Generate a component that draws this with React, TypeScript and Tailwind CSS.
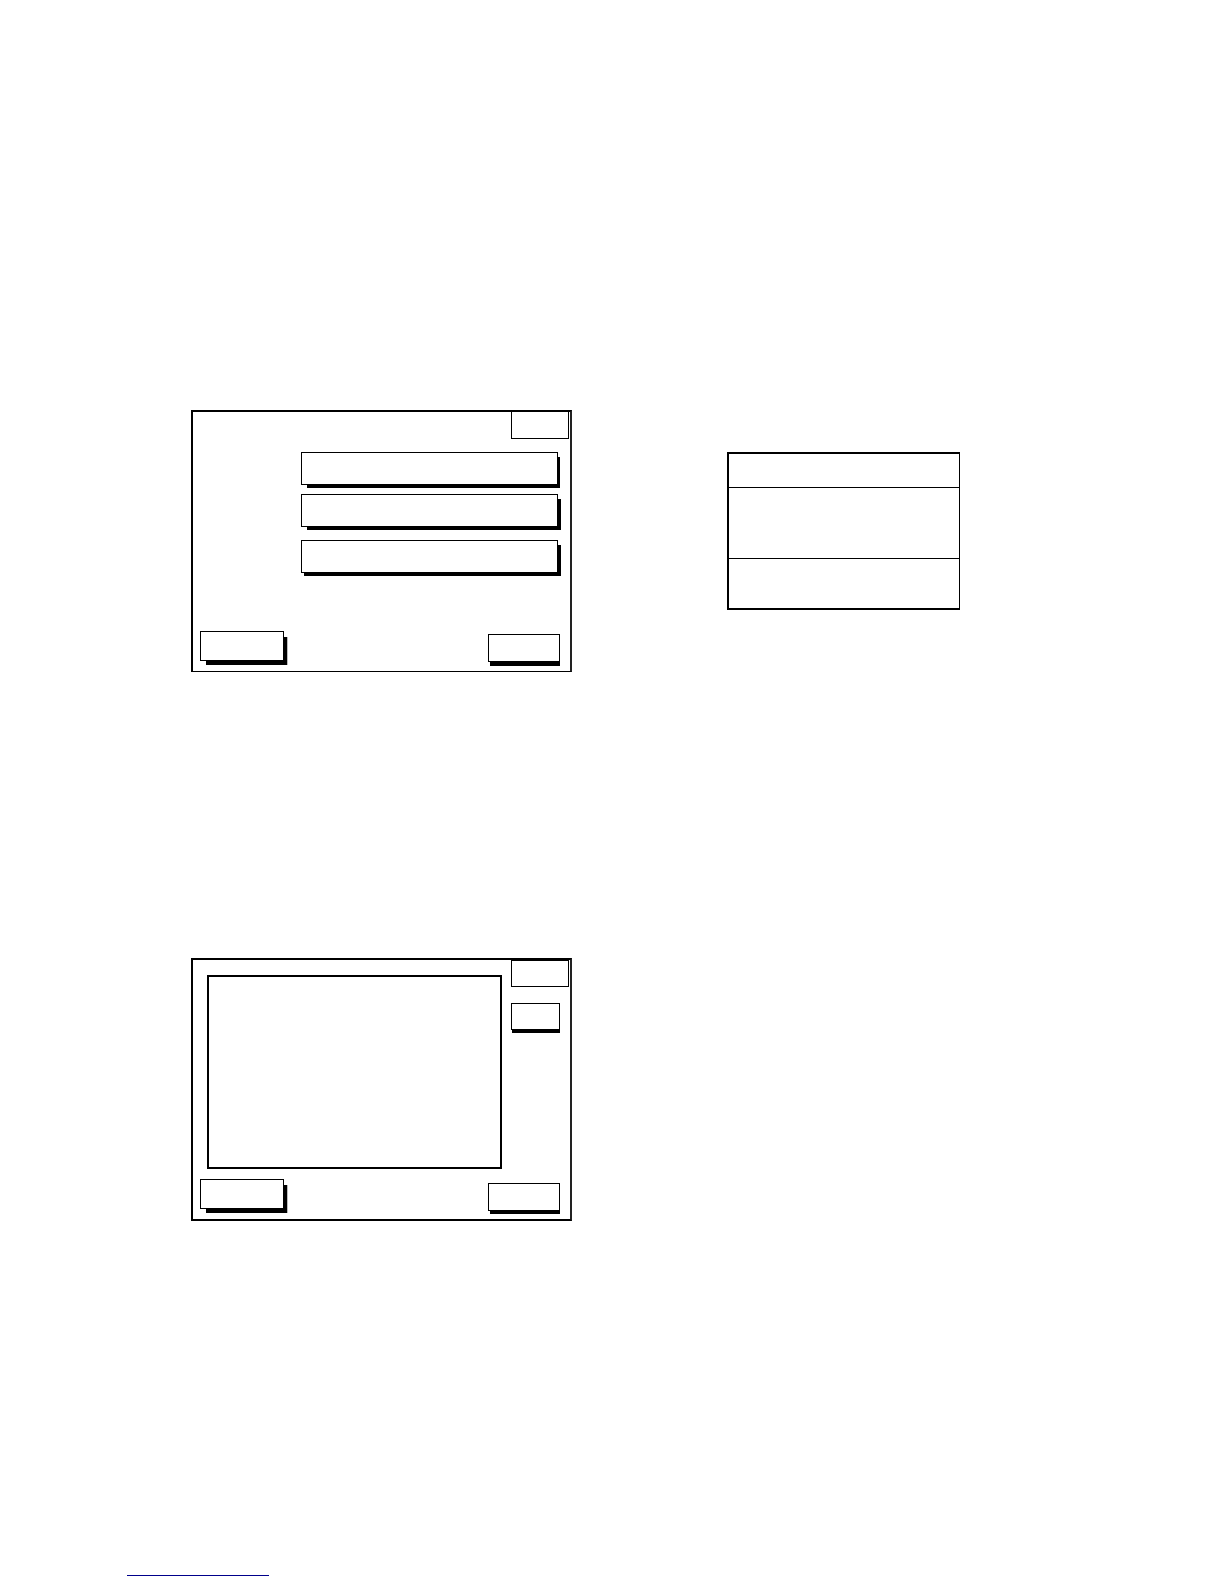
const rowButton = "block h-[33px] w-full border border-black bg-white";

function BackButton() {
  return (
    <button
      type="button"
      aria-label="Left key"
      className="h-[30px] w-[84px] border border-black bg-white shadow-[4px_6px_0_-2px_#000,5px_6px_0_-2px_#000,5px_4px_0_-2px_#000,5px_5px_0_-1px_#bbb]"
    />
  );
}

function OptionsPanel() {
  return (
    <section className="flex flex-col border-2 border-b border-black border-r-[#222]">
      <div className="mr-px h-[27px] w-[58px] self-end border border-t-0 border-black" />

      <div className="mt-[13px] ml-[108px] mr-3">
        <button
          type="button"
          aria-label="First option"
          className={`${rowButton} shadow-[4px_3px_0_-2px_#000,4px_5px_0_-2px_#000]`}
        />
        <button
          type="button"
          aria-label="Second option"
          className={`${rowButton} mt-[9px] shadow-[4px_5px_0_-2px_#000,5px_3px_0_-2px_#000,5px_5px_0_-2px_#000]`}
        />
        <button
          type="button"
          aria-label="Third option"
          className={`${rowButton} mt-[13px] shadow-[2px_4px_0_-1px_#000,4px_4px_0_-1px_#000]`}
        />
      </div>

      <div className="mt-[58px] flex items-start justify-between pl-[7px] pr-[10px] pb-[9px]">
        <BackButton />
        <button
          type="button"
          aria-label="Right key"
          className="mt-[3px] h-7 w-[72px] border border-black bg-white shadow-[1px_5px_0_-1px_#000]"
        />
      </div>
    </section>
  );
}

function DisplayPanel() {
  return (
    <section className="border-2 border-black border-r-[#222]">
      <div className="flex gap-[9px] pl-[14px] pr-px">
        <div className="mt-[15px] h-[194px] flex-1 border-2 border-black" />
        <div className="w-[58px]">
          <div className="h-[27px] border border-black" />
          <button
            type="button"
            aria-label="Side key"
            className="mt-4 block h-[27px] w-[49px] border border-black bg-white shadow-[0px_4px_0_-1px_#000,1px_4px_0_-1px_#000]"
          />
        </div>
      </div>

      <div className="mt-[10px] flex items-start justify-between pl-[7px] pr-[10px] pb-2">
        <BackButton />
        <button
          type="button"
          aria-label="Right key"
          className="mt-1 h-7 w-[72px] border border-black bg-white shadow-[1px_4px_0_-1px_#000]"
        />
      </div>
    </section>
  );
}

function InfoTable() {
  return (
    <table className="mt-[42px] w-full border-separate border-spacing-0 border-2 border-r border-black">
      <tbody>
        <tr>
          <td className="h-[34px] border-b border-black p-0" />
        </tr>
        <tr>
          <td className="h-[71px] border-b border-black p-0" />
        </tr>
        <tr>
          <td className="h-[49px] p-0" />
        </tr>
      </tbody>
    </table>
  );
}

export default function App() {
  return (
    <main className="min-h-screen bg-white pt-[410px] pb-2">
      <div className="grid grid-cols-[381fr_233fr] items-start gap-x-[155px] gap-y-[286px] pl-[191px] pr-[264px]">
        <OptionsPanel />
        <InfoTable />
        <DisplayPanel />
      </div>
      <a
        href="#top"
        aria-label="Footer link"
        className="mt-[334px] ml-[127px] block h-[21px] w-[142px] border-b border-[#00008b]"
      />
    </main>
  );
}
